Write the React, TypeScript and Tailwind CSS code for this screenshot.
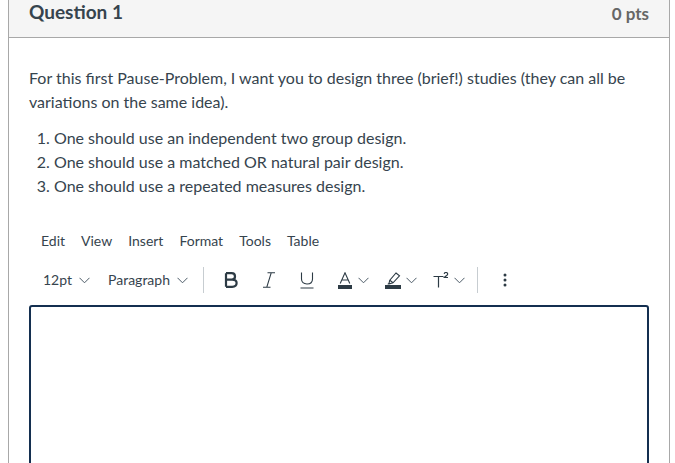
const MENU_ITEMS = ["Edit", "View", "Insert", "Format", "Tools", "Table"];

function Chevron({ className = "" }: { className?: string }) {
  return (
    <svg className={`shrink-0 ${className}`} width="11" height="7" viewBox="0 0 11 7" fill="none" stroke="#4c5a67" strokeWidth="1">
      <path d="M0.5 0.8L5.5 5.8L10.5 0.8" />
    </svg>
  );
}

function Divider() {
  return <div className="h-[26px] w-px bg-[#c7cdd1]" />;
}

function BoldIcon() {
  return (
    <svg width="14" height="16" viewBox="0 0 14 16" fill="none" stroke="#2d3b45" strokeWidth="2.2">
      <path d="M2 1.2V14.8M2 1.2H7.6C9.8 1.2 11 2.7 11 4.4C11 6.3 9.8 7.6 7.6 7.6H2M7.6 7.6H8.2C10.8 7.6 12.6 9 12.6 11.1C12.6 13.3 10.8 14.8 8.2 14.8H2" />
    </svg>
  );
}

function ItalicIcon() {
  return (
    <svg width="12" height="16" viewBox="0 0 12 16" fill="none" stroke="#2d3b45" strokeWidth="1.1">
      <path d="M4.5 0.8H12M0 15.2H7.5M8.2 0.8L3.8 15.2" />
    </svg>
  );
}

function UnderlineIcon() {
  return (
    <svg width="14" height="17" viewBox="0 0 14 17" fill="none" stroke="#2d3b45" strokeWidth="1.1">
      <path d="M1.5 0.5V7C1.5 10.2 3.6 12 7 12C10.4 12 12.5 10.2 12.5 7V0.5M0.5 16H13.5" />
    </svg>
  );
}

function TextColorIcon() {
  return (
    <svg width="14" height="17" viewBox="0 0 14 17" fill="none" stroke="#2d3b45" strokeWidth="1.1">
      <path d="M2.2 11.5L7 0.8L11.8 11.5M3.8 8H10.2" />
      <rect x="0" y="13" width="14" height="4" fill="#2d3b45" stroke="none" />
    </svg>
  );
}

function HighlightIcon() {
  return (
    <svg width="16" height="17" viewBox="0 0 16 17" fill="none" stroke="#2d3b45" strokeWidth="1.1">
      <path d="M11 1L14.5 3.8L8 10.8L4.4 11.8L4 11.4L4.8 8.2Z" />
      <path d="M4.8 8.2L8 10.8M4 11.4L2.8 12.4" />
      <rect x="0" y="13" width="16" height="4" fill="#2d3b45" stroke="none" />
    </svg>
  );
}

function SuperscriptIcon() {
  return (
    <svg width="16" height="16" viewBox="0 0 16 16" fill="none">
      <path d="M0.5 4.5H10.5M5.5 4.5V15.5" stroke="#2d3b45" strokeWidth="1.2" />
      <path d="M11.2 1.8C11.4 0.9 12.1 0.5 12.9 0.5C13.9 0.5 14.7 1 14.7 1.9C14.7 3.1 12.9 3.9 11.4 5.5H15" stroke="#2d3b45" strokeWidth="1.2" />
    </svg>
  );
}

function MoreIcon() {
  return (
    <svg width="4" height="14" viewBox="0 0 4 14" fill="#2d3b45">
      <circle cx="2" cy="2" r="1.5" />
      <circle cx="2" cy="7" r="1.5" />
      <circle cx="2" cy="12" r="1.5" />
    </svg>
  );
}

export default function App() {
  return (
    <div className="h-[463px] w-[675px] overflow-hidden bg-white pl-2 pr-[5px] font-['Lato',sans-serif] text-[#36444e]">
      <div className="h-[500px] border-x border-[#a8a8a8]">
        <div className="flex h-[38px] justify-between border-b border-[#a8a8a8] bg-[#f5f5f5] px-5">
          <h2 className="-mt-[1px] text-[19px] leading-[26px] font-bold">Question 1</h2>
          <span className="mt-[1px] text-[17px] leading-[26px] font-bold text-[#666]">0 pts</span>
        </div>
        <div className="px-5 pt-[28px]">
          <p className="text-[16px] leading-[24px]">
            For this first Pause-Problem, I want you to design three (brief!) studies (they can all be variations on the same idea).
          </p>
          <ol className="mt-3 list-decimal pl-[25px] text-[16px] leading-[24px]">
            <li>One should use an independent two group design.</li>
            <li>One should use a matched OR natural pair design.</li>
            <li>One should use a repeated measures design.</li>
          </ol>
          <div className="mt-[33px] flex gap-4 pl-3 text-[14px] leading-[20px]">
            {MENU_ITEMS.map((item) => (
              <span key={item}>{item}</span>
            ))}
          </div>
          <div className="mt-[16px] flex h-[26px] items-center pl-[14px] text-[14px]">
            <span className="-mt-[2px]">12pt</span>
            <Chevron className="ml-[7px]" />
            <span className="-mt-[2px] ml-[18px]">Paragraph</span>
            <Chevron className="ml-[7px]" />
            <div className="ml-[15px]"><Divider /></div>
            <div className="ml-[20px] flex"><BoldIcon /></div>
            <div className="ml-[25px] flex"><ItalicIcon /></div>
            <div className="ml-[25px] flex"><UnderlineIcon /></div>
            <div className="ml-[24px] flex"><TextColorIcon /></div>
            <Chevron className="ml-[6px]" />
            <div className="ml-[16px] flex"><HighlightIcon /></div>
            <Chevron className="ml-[5px]" />
            <div className="ml-[16px] flex"><SuperscriptIcon /></div>
            <Chevron className="ml-[5px]" />
            <div className="ml-[12px]"><Divider /></div>
            <div className="ml-[25px] flex"><MoreIcon /></div>
          </div>
          <div className="mt-[12px] h-[200px] rounded-[3px] border-2 border-[#142f50]" />
        </div>
      </div>
    </div>
  );
}
